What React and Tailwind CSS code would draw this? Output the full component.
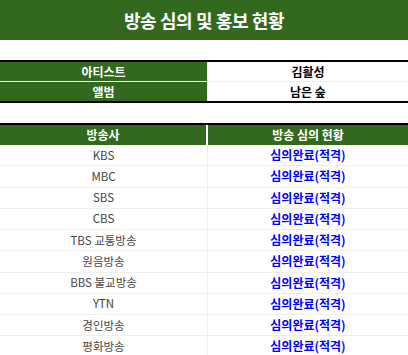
import React from "react";

const stations = [
  "KBS",
  "MBC",
  "SBS",
  "CBS",
  "TBS 교통방송",
  "원음방송",
  "BBS 불교방송",
  "YTN",
  "경인방송",
  "평화방송",
];

const font = { fontFamily: '"Noto Sans CJK KR", "Noto Sans", sans-serif' };

const App = () => {
  return (
    <div className="w-[408px] h-[355px] overflow-hidden bg-white" style={font}>
      <header className="h-10 bg-[#33691e] flex items-center justify-center">
        <h1 className="text-[18px] font-bold text-white tracking-[-0.4px]">
          방송 심의 및 홍보 현황
        </h1>
      </header>

      <div className="h-5" />

      <div className="border-y-2 border-black">
        <div className="grid grid-cols-[208px_1fr] h-5 border-b border-[#eeeeee]">
          <div className="bg-[#33691e] text-white text-[12px] font-bold flex items-center justify-center border-r border-[#eeeeee]">
            아티스트
          </div>
          <div className="text-black text-[12px] font-bold flex items-center justify-center">
            김활성
          </div>
        </div>
        <div className="grid grid-cols-[208px_1fr] h-[19px]">
          <div className="bg-[#33691e] text-white text-[12px] font-bold flex items-center justify-center border-r border-[#eeeeee]">
            앨범
          </div>
          <div className="text-black text-[12px] font-bold flex items-center justify-center">
            남은 숲
          </div>
        </div>
      </div>

      <div className="h-5" />

      <div className="border-t-2 border-black">
        <div className="grid grid-cols-[208px_1fr] h-5 bg-[#33691e] text-white text-[12px] font-bold">
          <div className="flex items-center justify-center border-r-2 border-white">방송사</div>
          <div className="flex items-center justify-center">방송 심의 현황</div>
        </div>
        {stations.map((name) => (
          <div
            key={name}
            className="grid grid-cols-[208px_1fr] h-[21.25px] border-b border-[#eeeeee]"
          >
            <div className="flex items-center justify-center text-[11.5px] text-[#444444] border-r border-[#eeeeee]">
              {name}
            </div>
            <div className="flex items-center justify-center text-[12px] font-bold text-[#0000ff]">
              심의완료(적격)
            </div>
          </div>
        ))}
      </div>
    </div>
  );
};

export default App;
